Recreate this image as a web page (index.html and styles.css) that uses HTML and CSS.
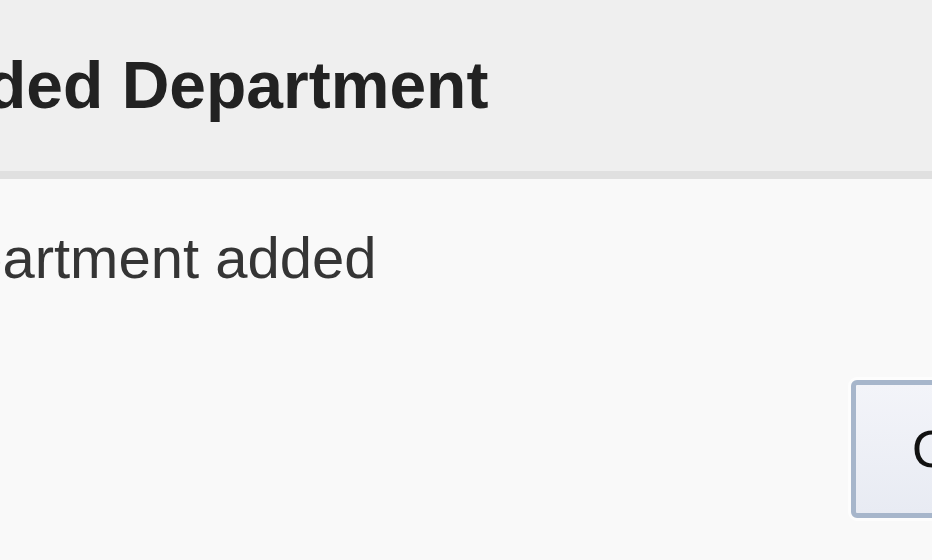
FILE: index.html
```html
<!DOCTYPE html>
<html lang="en">
<head>
<meta charset="utf-8">
<title>Added Department</title>
<link rel="stylesheet" href="styles.css">
</head>
<body>
<div class="dialog">
  <div class="dialog-header">
    <h1 class="dialog-title">Added Department</h1>
  </div>
  <div class="dialog-body">
    <p class="dialog-message">Department added</p>
    <div class="dialog-footer">
      <button class="btn" type="button">OK</button>
    </div>
  </div>
</div>
</body>
</html>
```

FILE: styles.css
```css
html, body {
  margin: 0;
  padding: 0;
  height: 100%;
  overflow: hidden;
  background: #f9f9f9;
}

.dialog {
  width: 932px;
  height: 560px;
  font-family: "Liberation Sans", Arial, sans-serif;
}

.dialog-header {
  height: 119px;
  padding-top: 52px;
  background: #efefef;
  border-bottom: 8px solid #e0e0e0;
}

.dialog-title {
  margin: 0 0 0 -102px;
  font-size: 66px;
  line-height: 66px;
  font-weight: bold;
  color: #222222;
  white-space: nowrap;
}

.dialog-body {
  padding-top: 50px;
  background: #f9f9f9;
}

.dialog-message {
  margin: 0 0 0 -104px;
  font-size: 58px;
  line-height: 58px;
  color: #353535;
  white-space: nowrap;
}

.dialog-footer {
  display: flex;
  justify-content: flex-end;
  margin-top: 93px;
}

.btn {
  box-sizing: border-box;
  flex: none;
  width: 197px;
  height: 138px;
  margin-right: -116px;
  padding: 0;
  border: 5px solid #a7b6cb;
  border-radius: 6px;
  background: linear-gradient(#f3f4f9, #e8ebf3);
  box-shadow: 0 0 0 3px rgba(255, 255, 255, 0.7);
  font-family: "Liberation Sans", Arial, sans-serif;
  font-size: 52px;
  line-height: 1;
  color: #111111;
}
```
